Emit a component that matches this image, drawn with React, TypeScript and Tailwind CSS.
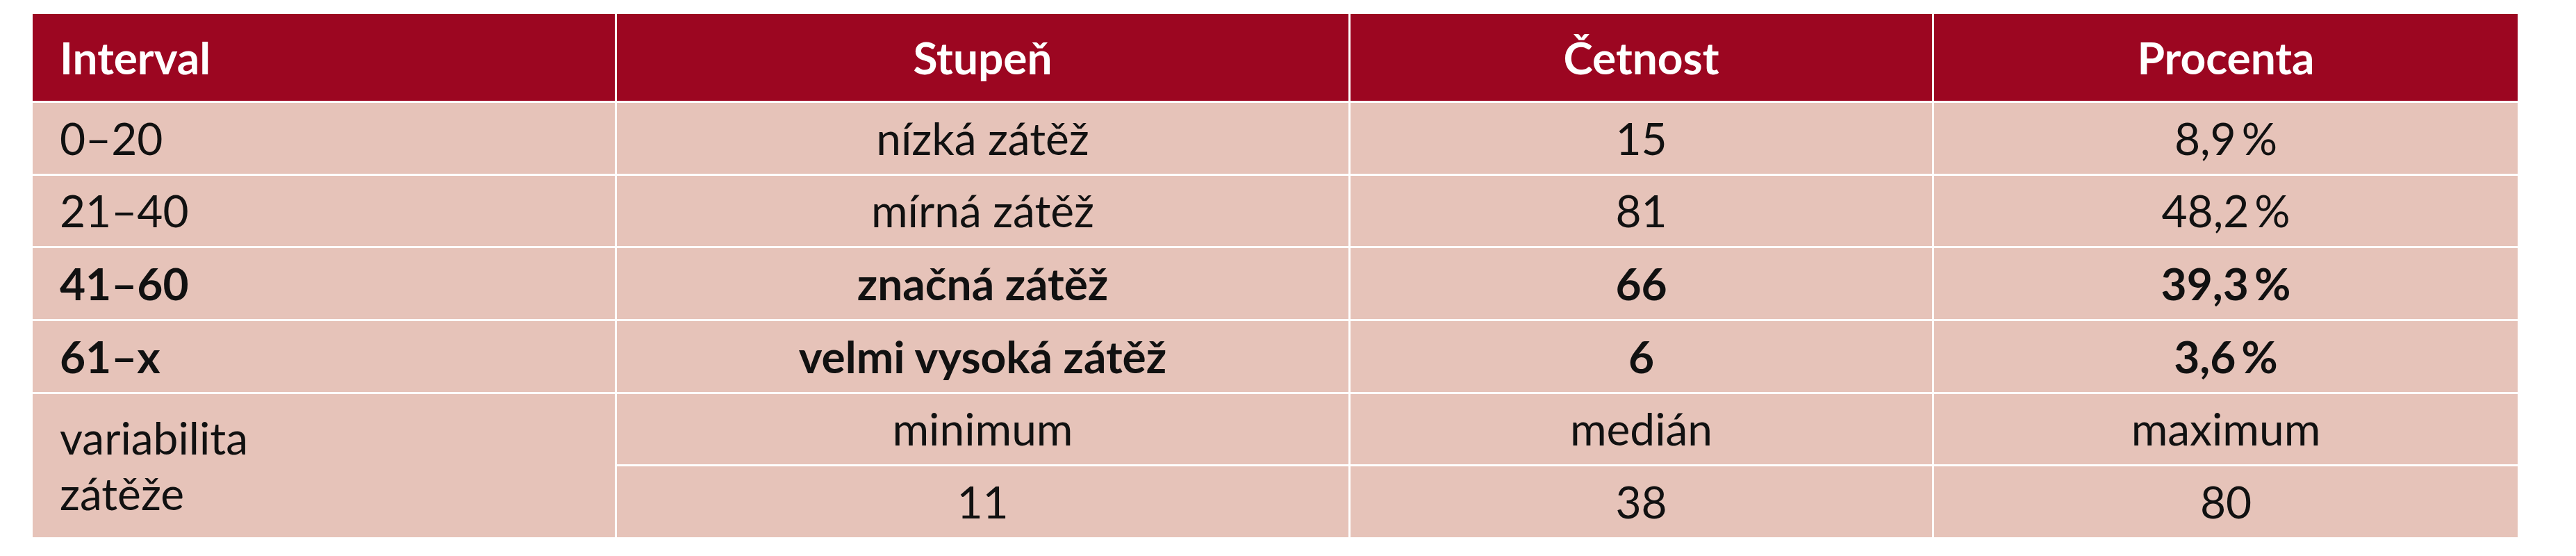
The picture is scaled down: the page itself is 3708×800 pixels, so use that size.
const rows = [
  { interval: "0–20", stupen: "nízká zátěž", cetnost: "15", procenta: "8,9\u2009%", bold: false },
  { interval: "21–40", stupen: "mírná zátěž", cetnost: "81", procenta: "48,2\u2009%", bold: false },
  { interval: "41–60", stupen: "značná zátěž", cetnost: "66", procenta: "39,3\u2009%", bold: true },
  { interval: "61–x", stupen: "velmi vysoká zátěž", cetnost: "6", procenta: "3,6\u2009%", bold: true },
];

const headCell = "flex items-center justify-center bg-[#9c0621] font-bold text-white";
const bodyCell = "flex items-center justify-center bg-[#e6c3b9] text-[#111111]";

export default function App() {
  return (
    <div className="min-h-[800px] w-[3708px] bg-white pl-[47px] pt-[20px] font-['Lato','Open_Sans',sans-serif] text-[64px] leading-[80px]">
      <div className="grid h-[753px] w-[3577px] grid-cols-[838px_1053px_837px_840px] grid-rows-[125px_repeat(6,minmax(0,1fr))] gap-[3px] bg-white">
        <div className={`${headCell} justify-start pl-[39px]`}>Interval</div>
        <div className={headCell}>Stupeň</div>
        <div className={headCell}>Četnost</div>
        <div className={headCell}>Procenta</div>

        {rows.map((r) => (
          <Row key={r.interval} {...r} />
        ))}

        <div className={`${bodyCell} row-span-2 justify-start pl-[39px]`}>
          <span>
            variabilita
            <br />
            zátěže
          </span>
        </div>
        <div className={bodyCell}>minimum</div>
        <div className={bodyCell}>medián</div>
        <div className={bodyCell}>maximum</div>
        <div className={bodyCell}>11</div>
        <div className={bodyCell}>38</div>
        <div className={bodyCell}>80</div>
      </div>
    </div>
  );
}

function Row({ interval, stupen, cetnost, procenta, bold }: { interval: string; stupen: string; cetnost: string; procenta: string; bold: boolean }) {
  const w = bold ? "font-bold" : "";
  return (
    <>
      <div className={`${bodyCell} ${w} justify-start pl-[39px]`}>{interval}</div>
      <div className={`${bodyCell} ${w}`}>{stupen}</div>
      <div className={`${bodyCell} ${w}`}>{cetnost}</div>
      <div className={`${bodyCell} ${w}`}>{procenta}</div>
    </>
  );
}
